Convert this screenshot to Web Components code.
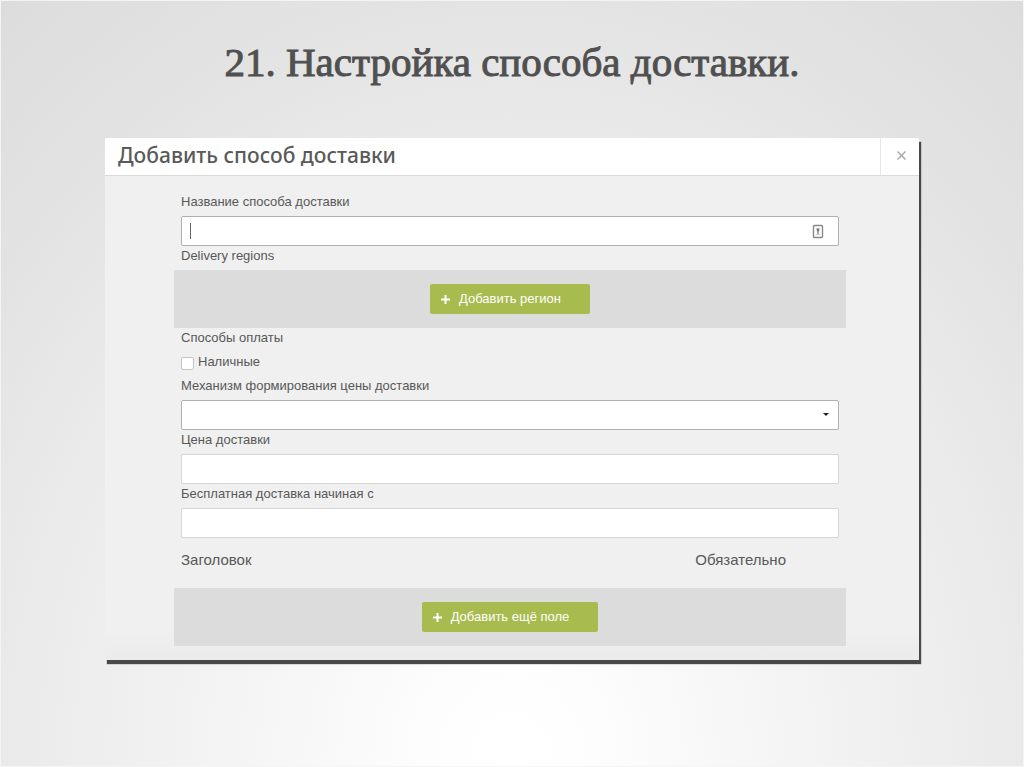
<!DOCTYPE html>
<html lang="ru">
<head>
<meta charset="utf-8">
<meta name="viewport" content="width=device-width, initial-scale=1">
<title>Настройка способа доставки</title>
<style>
  body {
    margin: 0;
    font-family: "Liberation Sans", Arial, sans-serif;
    color: #585858;
  }
</style>
</head>
<body>
<slide-page>
  <span slot="title">21. Настройка способа доставки.</span>
  <modal-dialog heading="Добавить способ доставки">
    <text-field label="Название способа доставки" active></text-field>
    <section-label>Delivery regions</section-label>
    <add-panel>Добавить регион</add-panel>
    <section-label>Способы оплаты</section-label>
    <check-field label="Наличные"></check-field>
    <select-field label="Механизм формирования цены доставки"></select-field>
    <text-field label="Цена доставки"></text-field>
    <text-field label="Бесплатная доставка начиная с"></text-field>
    <columns-head>
      <span>Заголовок</span>
      <span slot="end">Обязательно</span>
    </columns-head>
    <add-panel>Добавить ещё поле</add-panel>
  </modal-dialog>
</slide-page>

<script>
  // label and box rules shared by all the fields
  const fieldStyles = /*css*/ `
    :host {
      display: block;
      padding: 0 7px;
      font-size: 13px;
      line-height: 20px;
    }
    label {
      display: block;
      margin-bottom: 4px;
    }
    .box {
      position: relative;
      display: flex;
    }
    input, select {
      box-sizing: border-box;
      width: 100%;
      height: 30px;
      margin: 0;
      padding: 0 8px;
      border: 1px solid #d6d6d6;
      border-radius: 2px;
      background: #fff;
      color: inherit;
      font: inherit;
      outline: none;
    }
  `;

  class SlidePage extends HTMLElement {
    constructor() {
      super();
      this.attachShadow({ mode: 'open' });
    }

    connectedCallback() {
      this.shadowRoot.innerHTML = /*html*/ `
        <style>
          :host {
            display: block;
            box-sizing: border-box;
            min-height: 100vh;
            padding: 37px 104px 0;
            border: 1px solid #f4f4f4;
            background: radial-gradient(ellipse 80% 130% at 50% 100%, #fff 0%, #fefefe 8%, #f5f5f5 32%, #eaeaea 62%, #e3e3e3 78%, #dcdcdc 100%);
          }
          h1 {
            margin: 0 0 52px;
            font: 41px/48px "Liberation Serif", "Times New Roman", serif;
            -webkit-text-stroke: 1px #505050;
            text-align: center;
            color: #505050;
          }
        </style>
        <h1><slot name="title"></slot></h1>
        <slot></slot>
      `;
    }
  }

  class ModalDialog extends HTMLElement {
    constructor() {
      super();
      this.attachShadow({ mode: 'open' });
    }

    connectedCallback() {
      this.shadowRoot.innerHTML = /*html*/ `
        <style>
          :host {
            display: block;
            background: linear-gradient(#f0f0f0 94%, #ebebeb);
            box-shadow: 2px 4px 1px #484848;
          }
          header {
            display: flex;
            height: 37px;
            border-bottom: 1px solid #dadada;
            background: #fff;
          }
          h2 {
            flex: 1;
            margin: 0;
            padding-left: 13px;
            font: 500 21px/35px "Noto Sans", sans-serif;
            color: #5a5a5a;
          }
          button {
            display: flex;
            align-items: center;
            justify-content: center;
            width: 39px;
            padding: 0 0 2px 2px;
            border: 0;
            border-left: 1px solid #e8e8e8;
            background: none;
          }
          .body {
            padding: 16px 73px 14px 69px;
          }
        </style>
        <header>
          <h2></h2>
          <button type="button" aria-label="Закрыть">
            <svg width="9" height="9" viewBox="0 0 9 9" stroke="#aaa" stroke-width="1.5">
              <path d="M.5.5l8 8M8.500.5l-8 8"/>
            </svg>
          </button>
        </header>
        <div class="body"><slot></slot></div>
      `;
      this.shadowRoot.querySelector('h2').textContent = this.getAttribute('heading');
    }
  }

  class TextField extends HTMLElement {
    constructor() {
      super();
      this.attachShadow({ mode: 'open' });
    }

    connectedCallback() {
      const active = this.hasAttribute('active');
      this.shadowRoot.innerHTML = /*html*/ `
        <style>
          ${fieldStyles}
          :host([active]) input {
            border-color: #b0b0b0;
          }
          .caret {
            position: absolute;
            left: 9px;
            top: 7px;
            width: 1px;
            height: 16px;
            background: #666;
          }
          svg {
            position: absolute;
            right: 15px;
            top: 8px;
          }
        </style>
        <label for="input">${this.getAttribute('label')}</label>
        <div class="box">
          <input id="input" type="text">
          ${active ? `
          <span class="caret"></span>
          <svg width="12" height="15" viewBox="0 0 12 15" fill="none" stroke="#888">
            <rect x="1.5" y="1.5" width="9" height="12" rx="1" stroke-width="1.4"/>
            <path d="M4 4.5h4M4 10.5h4" stroke="#ccc"/>
            <circle cx="6" cy="6" r="1.4" fill="#777" stroke="none"/>
            <path d="M6 6v4" stroke="#777" stroke-width="1.2"/>
          </svg>` : ''}
        </div>
      `;
    }
  }

  class SelectField extends HTMLElement {
    constructor() {
      super();
      this.attachShadow({ mode: 'open' });
    }

    connectedCallback() {
      this.shadowRoot.innerHTML = /*html*/ `
        <style>
          ${fieldStyles}
          select {
            appearance: none;
            border-color: #b0b0b0;
          }
          svg {
            position: absolute;
            right: 10px;
            top: 13px;
            pointer-events: none;
          }
        </style>
        <label for="select">${this.getAttribute('label')}</label>
        <div class="box">
          <select id="select"><option value=""></option></select>
          <svg width="6" height="4" viewBox="0 0 6 4"><path d="M0 0h6L3 3z" fill="#222"/></svg>
        </div>
      `;
    }
  }

  class CheckField extends HTMLElement {
    constructor() {
      super();
      this.attachShadow({ mode: 'open' });
    }

    connectedCallback() {
      this.shadowRoot.innerHTML = /*html*/ `
        <style>
          ${fieldStyles}
          label {
            display: flex;
            align-items: center;
            gap: 4px;
          }
          input {
            appearance: none;
            width: 13px;
            height: 13px;
            margin-top: 2px;
            padding: 0;
            border-color: #c4c4c4;
          }
          input:checked {
            background: #a8bb4e;
          }
        </style>
        <label><input type="checkbox">${this.getAttribute('label')}</label>
      `;
    }
  }

  class SectionLabel extends HTMLElement {
    constructor() {
      super();
      this.attachShadow({ mode: 'open' });
    }

    connectedCallback() {
      this.shadowRoot.innerHTML = /*html*/ `
        <style>
          :host {
            display: block;
            padding: 0 7px 4px;
            font-size: 13px;
            line-height: 20px;
          }
        </style>
        <slot></slot>
      `;
    }
  }

  class AddPanel extends HTMLElement {
    constructor() {
      super();
      this.attachShadow({ mode: 'open' });
    }

    connectedCallback() {
      this.shadowRoot.innerHTML = /*html*/ `
        <style>
          :host {
            display: flex;
            justify-content: center;
            padding: 14px 0;
            background: #dcdcdc;
          }
          button {
            display: flex;
            align-items: center;
            gap: 9px;
            height: 30px;
            padding: 0 29px 0 11px;
            border: 0;
            border-radius: 2px;
            background: #a8bb4e;
            color: #fff;
            font: 13px/20px "Liberation Sans", Arial, sans-serif;
          }
        </style>
        <button type="button">
          <svg width="9" height="9" viewBox="0 0 9 9" stroke="#fff" stroke-width="2">
            <path d="M4.5 0v9M0 4.5h9"/>
          </svg>
          <span><slot></slot></span>
        </button>
      `;
    }
  }

  class ColumnsHead extends HTMLElement {
    constructor() {
      super();
      this.attachShadow({ mode: 'open' });
    }

    connectedCallback() {
      this.shadowRoot.innerHTML = /*html*/ `
        <style>
          :host {
            display: flex;
            justify-content: space-between;
            padding: 12px 60px 18px 7px;
            font-size: 15px;
            line-height: 20px;
          }
        </style>
        <slot></slot>
        <slot name="end"></slot>
      `;
    }
  }

  window.customElements.define('slide-page', SlidePage);
  window.customElements.define('modal-dialog', ModalDialog);
  window.customElements.define('text-field', TextField);
  window.customElements.define('select-field', SelectField);
  window.customElements.define('check-field', CheckField);
  window.customElements.define('section-label', SectionLabel);
  window.customElements.define('add-panel', AddPanel);
  window.customElements.define('columns-head', ColumnsHead);
</script>
</body>
</html>
